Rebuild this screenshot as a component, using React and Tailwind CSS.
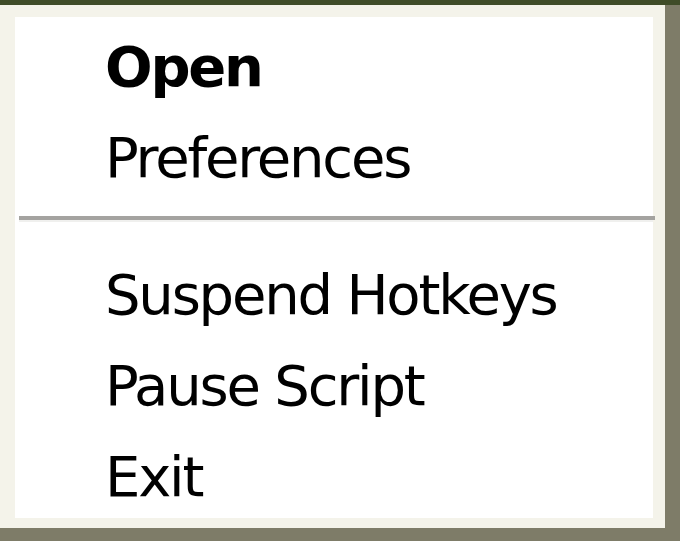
import React from "react";

const font = { fontFamily: '"DejaVu Sans", Tahoma, Verdana, sans-serif', letterSpacing: "-2.2px" };

function Item({ children, bold }) {
  return (
    <div
      className={`h-[91px] shrink-0 pl-[90px] pt-[4px] text-[56px] leading-[91px] text-black ${bold ? "font-bold" : ""}`}
      style={font}
    >
      {children}
    </div>
  );
}

export default function App() {
  return (
    <div className="w-[680px] h-[541px] flex flex-col bg-[#3d4a26] overflow-hidden">
      <div className="h-[5px] shrink-0 bg-[#3f4c28]" />
      <div className="flex-1 flex flex-col bg-[#f4f3ea] border-r-[15px] border-b-[13px] border-[#7e7c68]">
        <div className="flex-1 flex flex-col ml-[15px] mt-[12px] mr-[12px] mb-[10px] bg-white">
          <Item bold>Open</Item>
          <Item>Preferences</Item>
          <div className="h-[46px] shrink-0 flex flex-col pt-[17px]">
            <div className="h-[4px] bg-[#a4a3a0] ml-[4px] mr-[-2px]" />
            <div className="h-[2px] bg-[#f0f0ee] ml-[4px]" />
          </div>
          <Item>Suspend Hotkeys</Item>
          <Item>Pause Script</Item>
          <Item>Exit</Item>
        </div>
      </div>
    </div>
  );
}
